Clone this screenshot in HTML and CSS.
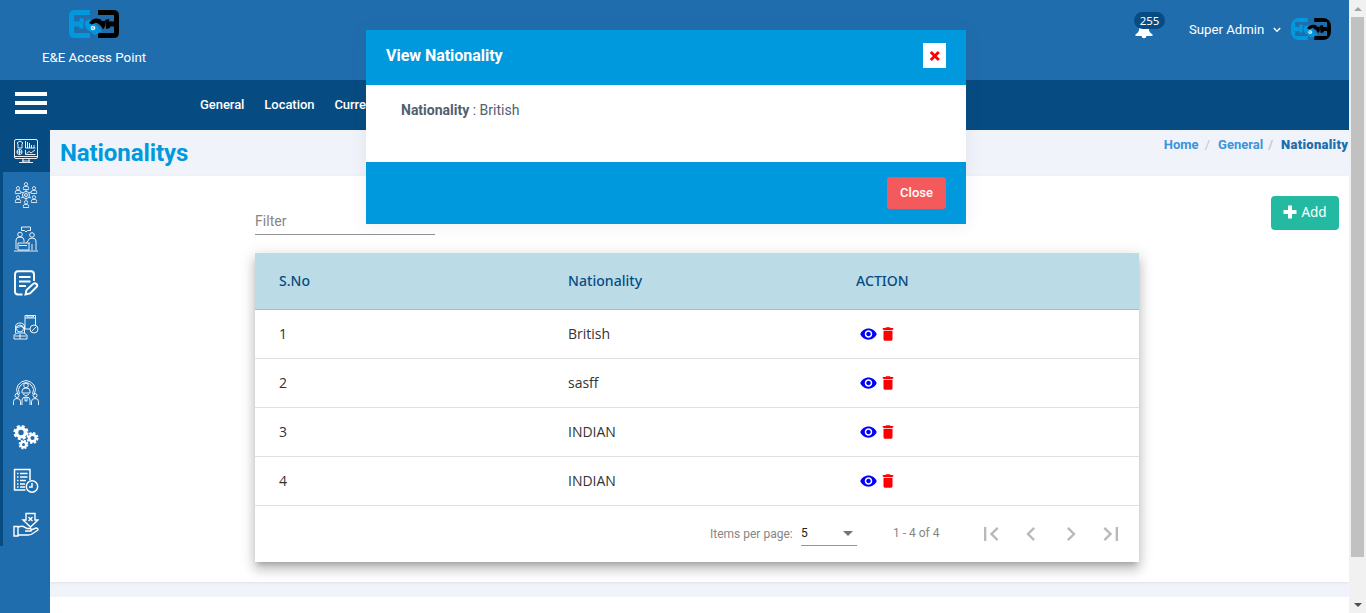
FILE: index.html
```html
<!DOCTYPE html>
<html lang="en">
<head>
<meta charset="utf-8">
<title>E&amp;E Access Point</title>
<link rel="stylesheet" href="styles.css">
</head>
<body>
<svg class="defs" width="0" height="0">
  <symbol id="logo" viewBox="0 0 50 28" preserveAspectRatio="none">
    <g fill="none" stroke-width="5">
      <path stroke="#0099de" d="M21 2.500H5.500Q2.500 2.500 2.500 5.500V22.500Q2.500 25.500 5.500 25.500H21M5 14H11"/>
      <path stroke="#000" d="M29 2.500H44.500Q47.500 2.500 47.500 5.500V22.500Q47.500 25.500 44.500 25.500H29M45 14H39"/>
    </g>
    <path fill="#0099de" d="M11 8l4 1-1 10-4-1zM16 12q3-4 6-2l1 3 3 1 7 6-1 2-2 .3-1 1.700-2 .3-1 1-8-6-2-3z"/>
    <path fill="#000" d="M40 9l-4 1 1 9 4-1zM36 11l-3 0-2-2q-7-2-11 4l3 1.500 4-2q5 2 7 7l2-3z"/>
    <circle cx="24" cy="18" r="2.300" fill="#e4f4fc"/>
    <path fill="none" stroke="#0099de" stroke-width=".7" d="M23 17l2 2.500M24.500 16.500l-1.500 2"/>
    <path fill="none" stroke="#206dae" stroke-width=".6" d="M27 19l3 3.500M29 18l3 3M24 21.500l3 3"/>
  </symbol>
  <symbol id="eye" viewBox="0 0 24 24"><path d="M12 4.500C7 4.500 2.730 7.610 1 12c1.730 4.390 6 7.500 11 7.500s9.270-3.110 11-7.500c-1.730-4.390-6-7.500-11-7.500zM12 17c-2.760 0-5-2.240-5-5s2.240-5 5-5 5 2.240 5 5-2.240 5-5 5zm0-8c-1.660 0-3 1.340-3 3s1.340 3 3 3 3-1.340 3-3-1.340-3-3-3z"/></symbol>
  <symbol id="trash" viewBox="0 0 24 24"><path d="M6 19c0 1.100.9 2 2 2h8c1.100 0 2-.9 2-2V7H6v12zM6 6h12v2H6zM19 4h-3.500l-1-1h-5l-1 1H5v2h14V4z"/></symbol>
  <symbol id="person" viewBox="0 0 8 9"><circle cx="4" cy="2.500" r="1.900"/><path d="M.8 8.500V7q0-2 2-2h2.400q2 0 2 2v1.500z"/></symbol>
</svg>
<div class="window">
  <div class="page">
    <header class="header">
      <div class="brand">
        <svg class="brand-logo"><use href="#logo"/></svg>
        <span>E&amp;E Access Point</span>
      </div>
      <div class="user">
        <div class="bell">
          <svg width="18" height="20" viewBox="0 0 18 20"><path fill="#fff" d="M9 1q5 1 5 7v3q0 2 3.500 4.500V17H.5v-1.500Q4 13 4 11V8q0-6 5-7zM6.500 17h5q-.5 2.200-2.500 2.200T6.500 17z"/></svg>
          <span class="badge">255</span>
        </div>
        <span class="user-name">Super Admin</span>
        <svg class="chev" width="8" height="6" viewBox="0 0 8 6"><path d="M.8 1L4 4.200 7.200 1" fill="none" stroke="#fff" stroke-width="1.400"/></svg>
        <svg class="avatar"><use href="#logo"/></svg>
      </div>
    </header>
    <nav class="nav">
      <div class="burger"><i></i><i></i><i></i></div>
      <a>General</a><a>Location</a><a>Currency</a>
    </nav>
    <div class="body">
      <aside class="side">
        <div class="side-item active">
          <svg width="26" height="26" viewBox="0 0 26 26"><rect x="1.500" y="1.500" width="23" height="19" rx="1.500"/><path d="M1 18.500h24M10 21v3M16 21v3M6 24.500h14M9 23h8M4 5l3-2 3 2-1 1v4H5v-4zM12.500 3v7h10M14.500 10V4M16.500 10V5M18.500 10V7M21 10V7M12.500 12v4.500h10M13.500 15.500l2.500-2 2 1.500 4-3"/><circle cx="6.500" cy="14" r="2.600"/><path d="M6.500 11.500v5M4 14h5"/></svg>
        </div>
        <div class="side-menu">
          <div class="side-item"><svg width="26" height="26" viewBox="0 0 26 26"><use href="#person" x="9.500" y="0" width="7" height="8"/><use href="#person" x="9.500" y="18" width="7" height="8"/><use href="#person" x="1.500" y="4" width="7" height="8"/><use href="#person" x="17.500" y="4" width="7" height="8"/><use href="#person" x="1.500" y="13" width="7" height="8"/><use href="#person" x="17.500" y="13" width="7" height="8"/><circle cx="13" cy="13" r="3.500"/><circle cx="13" cy="13" r="1.500"/><path d="M13 8v2M13 16v2M8 10l2 1M18 10l-2 1M8 16l2-1M18 16l-2-1"/></svg></div>
          <div class="side-item"><svg width="26" height="26" viewBox="0 0 26 26"><path d="M8.500 1h9v3.500h-3L13 6l-1.500-1.500h-3zM1 25h24M3 23v-9q0-3 4-3t4 3v2M23 24v-9q0-3-4-3-3.500 0-4 3l-2 2M5 17h12M5 17v7h11v-7M19 18v6M6 19.500h8"/><circle cx="7" cy="8.500" r="2.300"/><circle cx="19" cy="9" r="2.300"/></svg></div>
          <div class="side-item"><svg width="26" height="26" viewBox="0 0 26 26"><g stroke-width="1.900"><path d="M9.500 24.500H5Q2 24.500 2 21.500v-17Q2 1.300 5 1.300h13Q21 1.300 21 4.500V11M6 7h11.500M6 11.500h11.500M6 16h7M12.500 24.500l1-4.500 6.500-6q2-1.500 3.500 0t0 3L17 23.500z"/></g></svg></div>
          <div class="side-item"><svg width="26" height="26" viewBox="0 0 26 26"><path d="M12 10V1.500h10.500V11M12 4h10M12 10v5h5M14 1.500v1.500h6.500V1.500M2.500 19v-6q0-4 4.500-4t4.500 4v6M1 25v-4l3-2h7l3 2v4zM2 22h11M7 20v5M3 13q3 1 5-1 1 2 3 2"/><circle cx="7" cy="14.500" r="3.500"/><circle cx="21" cy="15" r="4"/><path d="M18.500 17.500l5-5"/></svg></div>
          <div class="side-item gap"><svg width="26" height="26" viewBox="0 0 26 26"><path d="M5 15Q2 9 5 5q4-4.500 8-4.500T21 5q3 4 0 10M6.500 14Q4 9 7 6q3-3.500 6-3.500T19 6q3 3 .5 8M9 13v-2q0-3 4-3t4 3v2zM9 25v-5q0-3 4-3t4 3v5M12 17v4h2v-4M.5 25v-3.500q0-3 3.500-3t3.500 3V25M18.500 25v-3.500q0-3 3.500-3t3.500 3V25"/><circle cx="13" cy="5.500" r="2.300"/><circle cx="4" cy="15.500" r="2"/><circle cx="22" cy="15.500" r="2"/><path d="M10 14l3 2 3-2"/></svg></div>
          <div class="side-item"><svg width="26" height="26" viewBox="0 0 26 26"><circle cx="8" cy="8.500" r="4.400" stroke-width="3.400"/><circle cx="8" cy="8.500" r="6.300" stroke-width="2.600" stroke-dasharray="2.900 2.048"/><circle cx="19.500" cy="14" r="3.400" stroke-width="2.600"/><circle cx="19.500" cy="14" r="5" stroke-width="2" stroke-dasharray="2.300 1.627"/><circle cx="10.500" cy="20.500" r="2.600" stroke-width="2.200"/><circle cx="10.500" cy="20.500" r="4" stroke-width="1.800" stroke-dasharray="1.900 1.242"/></svg></div>
          <div class="side-item"><svg width="26" height="26" viewBox="0 0 26 26"><g stroke-width="1.500"><path d="M12.500 22H1.500V1.500H17V12M4 5.500h1.500M7 5.500h7.500M4 9h1.500M7 9h7.500M4 12.500h1.500M7 12.500h6M4 16h1.500M7 16h5M4 19h1.500M7 19h5"/><circle cx="19" cy="18.500" r="5.700"/><path d="M19 15v4h-3"/></g></svg></div>
          <div class="side-item"><svg width="26" height="26" viewBox="0 0 26 26"><g stroke-width="1.400"><path d="M13 1.500h9V8h3l-7.500 7L10 8h3zM15.500 5l4 4M19.500 5l-4 4M1 14.500h4V24H1zM5 15.500q4-2.500 7 0l2 1h3q2 .5 1 2.500h-6M18 18l5-2q2 0 2 2l-6 4q-1.500 1-4 1H5"/></g></svg></div>
        </div>
      </aside>
      <main class="main">
        <div class="titlebar">
          <h1>Nationalitys</h1>
          <div class="crumbs"><a>Home</a><i>/</i><a>General</a><b>/</b><strong>Nationality</strong></div>
        </div>
        <section class="content">
          <div class="filter">Filter</div>
          <button class="add"><svg width="14" height="14" viewBox="0 0 14 14"><path d="M5 .5h4V5h4.500v4H9v4.500H5V9H.5V5H5z" fill="#fff"/></svg>Add</button>
          <div class="card">
            <div class="row head"><span>S.No</span><span>Nationality</span><span>ACTION</span></div>
            <div class="row"><span>1</span><span>British</span><span class="act"><svg class="eye"><use href="#eye"/></svg><svg class="trash"><use href="#trash"/></svg></span></div>
            <div class="row"><span>2</span><span>sasff</span><span class="act"><svg class="eye"><use href="#eye"/></svg><svg class="trash"><use href="#trash"/></svg></span></div>
            <div class="row"><span>3</span><span>INDIAN</span><span class="act"><svg class="eye"><use href="#eye"/></svg><svg class="trash"><use href="#trash"/></svg></span></div>
            <div class="row"><span>4</span><span>INDIAN</span><span class="act"><svg class="eye"><use href="#eye"/></svg><svg class="trash"><use href="#trash"/></svg></span></div>
            <div class="pager">
              <span class="ipp">Items per page:</span>
              <span class="select">5<i></i></span>
              <span class="range">1 - 4 of 4</span>
              <svg viewBox="0 0 24 24"><path d="M18.410 16.590L13.820 12l4.590-4.590L17 6l-6 6 6 6zM6 6h2v12H6z"/></svg>
              <svg viewBox="0 0 24 24"><path d="M15.410 7.410L14 6l-6 6 6 6 1.410-1.410L10.830 12z"/></svg>
              <svg viewBox="0 0 24 24"><path d="M10 6L8.590 7.410 13.170 12l-4.580 4.590L10 18l6-6z"/></svg>
              <svg viewBox="0 0 24 24"><path d="M5.590 7.410L10.180 12l-4.590 4.590L7 18l6-6-6-6zM16 6h2v12h-2z"/></svg>
            </div>
          </div>
        </section>
        <div class="footer"></div>
      </main>
    </div>
  </div>
  <div class="scroll"><i class="up"></i><div class="thumb"></div><i class="down"></i></div>
</div>
<div class="modal">
  <div class="modal-head"><h2>View Nationality</h2><button class="x"><svg width="12" height="12" viewBox="0 0 12 12"><path d="M1.800 2l8 8M9.800 2l-8 8" stroke="#f00" stroke-width="2.800"/></svg></button></div>
  <div class="modal-body"><b>Nationality</b> : British</div>
  <div class="modal-foot"><button class="close">Close</button></div>
</div>
</body>
</html>
```
FILE: styles.css
```css
* { box-sizing: border-box; }
body { margin: 0; height: 613px; overflow: hidden; font-family: Roboto, sans-serif; font-size: 13px; color: #51606f; }
button { border: 0; font-family: inherit; padding: 0; }
svg { display: block; flex: none; }
.defs { position: absolute; }
.window { display: flex; height: 613px; }
.page { width: 1349px; display: flex; flex-direction: column; }

.header { height: 80px; background: #206dae; display: flex; justify-content: space-between; color: #fff; }
.brand { width: 188px; padding-top: 10px; display: flex; flex-direction: column; align-items: center; gap: 11px; line-height: 17px; font-size: 13.300px; }
.brand-logo { width: 50px; height: 28px; }
.user { display: flex; align-items: center; height: 58px; padding-right: 18px; font-size: 13.200px; }
.bell { position: relative; width: 54px; }
.badge { position: absolute; left: -1px; top: -7px; width: 31px; height: 17px; border-radius: 9px; background: #064b81; font: 11.500px/17px "Noto Sans", sans-serif; text-align: center; }
.user-name { width: 76px; white-space: nowrap; }
.chev { margin: 2px 10px 0 8px; }
.avatar { width: 40px; height: 22px; border-radius: 8px; }

.nav { height: 50px; background: #064b81; display: flex; align-items: center; color: #fff; font-size: 13px; font-weight: 500; gap: 20px; letter-spacing: -.05px; }
.nav a { margin-top: -2px; }
.burger { width: 32px; margin: -4px 133px 0 15px; display: flex; flex-direction: column; gap: 5px; }
.burger i { height: 4px; background: #fff; }

.body { flex: 1; display: flex; }
.side { width: 50px; background: #206dae; }
.side-menu { border-left: 3px solid #064b81; height: 374px; padding-top: 1px; }
.side-item { height: 44px; display: flex; justify-content: center; align-items: center; padding-right: 2px; }
.side-item svg { fill: none; stroke: #fff; stroke-width: .9; }
.side-item.active { height: 42px; background: #064b81; padding: 0 0 0 2px; }
.side-item.gap { margin-top: 22px; }

.main { flex: 1; display: flex; flex-direction: column; background: #f0f3f9; }
.titlebar { height: 46px; display: flex; justify-content: space-between; padding-left: 10px; }
h1 { margin: 8px 0 0; font-size: 24px; line-height: 30px; font-weight: 700; color: #0099de; letter-spacing: -.1px; }
.crumbs { display: flex; padding-top: 6px; font-size: 13px; line-height: 17px; font-weight: 700; color: #3a95db; }
.crumbs i, .crumbs b { color: #c5c8cc; font-style: normal; font-weight: 400; margin: 0 8px 0 6px; }
.crumbs b { font-weight: 700; margin: 0 8px 0 5px; }
.crumbs strong { color: #206dae; width: 68px; letter-spacing: .3px; }

.content { height: 406px; background: #fff; box-shadow: 0 1px 3px rgba(0,0,0,.08); display: grid; grid-template-columns: 205px 884px 1fr; grid-template-rows: 77px 1fr; }
.filter { grid-column: 2; width: 180px; height: 59px; padding-top: 37px; border-bottom: 1px solid #949494; font-size: 14px; line-height: 16px; color: #858585; letter-spacing: .05px; }
.add { grid-column: 3; justify-self: end; margin: 20px 10px 0 0; width: 68px; height: 34px; padding-bottom: 2px; border-radius: 4px; background: #24baa2; color: #fff; font: 13.500px "Noto Sans", sans-serif; display: flex; align-items: center; justify-content: center; gap: 4px; }
.card { grid-column: 2; height: 309px; background: #fff; box-shadow: 0 5px 5px -3px rgba(0,0,0,.2), 0 8px 10px 1px rgba(0,0,0,.14), 0 3px 14px 2px rgba(0,0,0,.12); }
.row { height: 49px; border-bottom: 1px solid #e0e0e0; padding-left: 24px; display: grid; grid-template-columns: 289px 288px 1fr; align-items: center; font: 14px "Open Sans", sans-serif; color: #333; }
.row span:not(.act) { padding-bottom: 2px; }
.row.head { height: 57px; background: #bbdbe7; border-color: #a3c0cd; color: #064b81; font-weight: 500; font-family: "Noto Sans", sans-serif; letter-spacing: .05px; }
.act { display: flex; align-items: center; padding-left: 3px; }
.eye { width: 19px; height: 18px; fill: #00f; }
.trash { width: 18px; height: 18px; margin-left: 1px; fill: #f00; }
.pager { height: 56px; display: flex; align-items: center; padding-left: 455px; font-size: 12px; color: #868686; }
.ipp { width: 91px; }
.select { width: 56px; height: 23px; border-bottom: 1px solid #949494; line-height: 21px; color: #222; display: flex; justify-content: space-between; align-items: center; padding-right: 4px; }
.select i { border: 5px solid transparent; border-top-color: #757575; border-bottom: 0; }
.range { width: 84px; margin: -2px 0 0 36px; }
.pager svg { width: 28px; height: 28px; margin-right: 12px; fill: #b9b9b9; }
.footer { margin-top: 15px; flex: 1; background: #fff; }

.scroll { width: 17px; background: #f1f1f1; display: flex; flex-direction: column; align-items: center; padding: 7px 0 6px; }
.up, .down { border: 4px solid transparent; }
.up { border-top: 0; border-bottom-color: #a3a3a3; }
.down { border-bottom: 0; border-top-color: #505050; margin-top: auto; }
.thumb { width: 13px; height: 540px; background: #c1c1c1; margin-top: 6px; }

.modal { position: absolute; left: 366px; top: 30px; width: 600px; height: 194px; background: #fff; box-shadow: 0 1px 15px 1px rgba(69,65,78,.08); display: flex; flex-direction: column; }
.modal-head { height: 55px; background: #0099de; padding: 0 20px; display: flex; justify-content: space-between; align-items: center; }
h2 { margin: -4px 0 0; color: #fff; font-size: 16px; font-weight: 700; letter-spacing: -.03px; }
.x { width: 23px; height: 25px; margin-top: -4px; background: #fff; display: flex; align-items: center; justify-content: center; }
.modal-body { flex: 1; padding: 17px 35px; font-size: 14px; line-height: 17px; }
.modal-foot { height: 62px; background: #0099de; padding: 15px 20px; display: flex; justify-content: flex-end; }
.close { width: 59px; height: 32px; padding-bottom: 2px; border-radius: 3px; background: #f4595b; color: #fff; font-size: 13px; font-weight: 500; }
```
